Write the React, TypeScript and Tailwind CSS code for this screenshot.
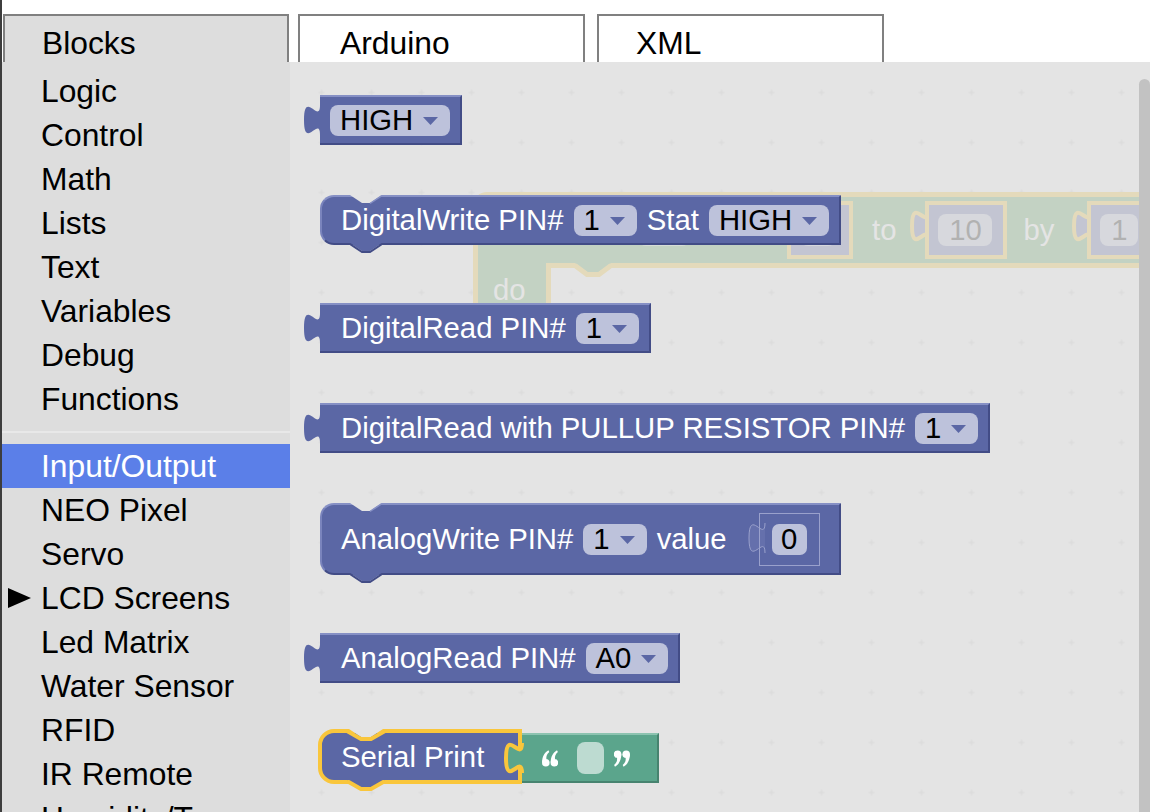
import React from "react";

const toolTop = ["Logic", "Control", "Math", "Lists", "Text", "Variables", "Debug", "Functions"];
const toolBottom = ["Input/Output", "NEO Pixel", "Servo", "LCD Screens", "Led Matrix", "Water Sensor", "RFID", "IR Remote", "Humidity/Temp"];

const PURPLE = "#5b67a5";
const PURPLE_DARK = "#424c86";
const GREEN = "#5ba58c";
const LOOP_GREEN = "#5ba55b";
const SELECT = "#f9c63c";
const FLYOUT = "#e4e4e4";

// blockly puzzle tab (output connector), knob spans x 4..20
function TabShape({ fill, stroke, strokeWidth = 0, className = "" }: { fill: string; stroke?: string; strokeWidth?: number; className?: string }) {
  return (
    <svg width="20" height="30" viewBox="0 0 20 30" overflow="visible" className={className}>
      <path d="M20 0 C20 20 4 -16 4 15 C4 46 20 10 20 30" fill={fill} stroke={stroke ?? "none"} strokeWidth={strokeWidth} />
    </svg>
  );
}

function Dropdown({ label }: { label: string }) {
  return (
    <div className="flex h-[31px] shrink-0 items-center rounded-[8px] bg-[#bdc2db] pl-[10px] pr-[12px] text-black">
      <span>{label}</span>
      <svg width="15" height="8" viewBox="0 0 15 8" className="ml-[10px] mt-[2px]">
        <path d="M0 0 H15 L7.5 8 Z" fill={PURPLE} />
      </svg>
    </div>
  );
}

function OutputBlock({ children, className = "" }: { children: React.ReactNode; className?: string }) {
  return (
    <div className={`relative flex h-[50px] shrink-0 items-center gap-[10px] border-y-2 border-r-2 border-t-[#8690c5] border-b-[#424c86] border-r-[#424c86] bg-[#5b67a5] pr-[10px] ${className}`}>
      <TabShape className="absolute left-[-20px] top-[8px]" fill={PURPLE} />
      {children}
    </div>
  );
}

function StatementBlock({ children, className = "" }: { children: React.ReactNode; className?: string }) {
  return (
    <div className={`relative flex shrink-0 items-center gap-[10px] rounded-l-[14px] border-2 border-t-[#8690c5] border-l-[#7a84bd] border-b-[#424c86] border-r-[#424c86] bg-[#5b67a5] pl-[19px] ${className}`}>
      <svg className="absolute left-[28px] top-[-2px]" width="32" height="10" viewBox="0 0 32 10">
        <path d="M0 0 L12 8 H20 L32 0 Z" fill={FLYOUT} />
        <path d="M20 8.5 L32 0.5" fill="none" stroke="#8690c5" strokeWidth="1.5" />
      </svg>
      <svg className="absolute bottom-[-10px] left-[28px]" width="32" height="10" viewBox="0 0 32 10">
        <path d="M0 0 L12 8 H20 L32 0 Z" fill={PURPLE} />
        <path d="M0 1 L12 9 H20 L32 1" fill="none" stroke={PURPLE_DARK} strokeWidth="2" />
      </svg>
      {children}
    </div>
  );
}

function QuoteMark({ x }: { x: number }) {
  return (
    <g transform={`translate(${x} 0)`}>
      <circle cx="3.8" cy="12.8" r="3.8" />
      <path d="M0.1 12.4 C0.1 6.6 2.6 2.6 6.4 0.3 L7.3 2 C5 3.9 4 6.3 4.4 9.2 Z" />
    </g>
  );
}

function Quote({ close = false, className = "" }: { close?: boolean; className?: string }) {
  return (
    <svg width="16" height="17" viewBox="0 0 16 17" fill="white" className={className}>
      <g transform={close ? "rotate(180 8 8.5)" : undefined}>
        <QuoteMark x={0} />
        <QuoteMark x={8.6} />
      </g>
    </svg>
  );
}

// value slot inside the (faded) loop block
function LoopSlot({ w, label, fieldW, className = "" }: { w: string; label?: string; fieldW: string; className?: string }) {
  return (
    <div className={`flex h-[58px] shrink-0 items-start ${className}`}>
      <TabShape className="mt-[10px] -mr-[3px]" fill={PURPLE} stroke="#ffcc33" strokeWidth={4} />
      <div className={`flex h-[58px] items-center border-4 border-[#ffcc33] bg-[#5b67a5] pl-[9px] ${w}`}>
        <div className={`flex h-[32px] items-center justify-center rounded-[8px] bg-[#bdc2db] text-black ${fieldW}`}>{label}</div>
      </div>
    </div>
  );
}

function LoopBlock() {
  return (
    <div className="absolute left-[183px] top-[130px] text-[29.3px] leading-none text-white">
      <div className="relative flex h-[76px] w-[730px] items-center rounded-tl-[14px] border-[5px] border-[#ffcc33] bg-[#5ba55b] pl-[15px]">
        {/* "count with i from" sits under the DigitalWrite block */}
        <div className="h-[20px] w-[131px] shrink-0" />
        <div className="ml-[14px] h-[32px] w-[52px] shrink-0 rounded-[8px] bg-[#bddbbd]" />
        <div className="ml-[15px] h-[20px] w-[58px] shrink-0" />
        <LoopSlot className="ml-[7px]" w="w-[66px]" fieldW="w-[36px]" />
        <span className="ml-[19px]">to</span>
        <LoopSlot className="ml-[12px]" w="w-[82px]" fieldW="w-[54px]" label="10" />
        <span className="ml-[16px]">by</span>
        <LoopSlot className="ml-[16px]" w="w-[100px]" fieldW="w-[38px]" label="1" />
      </div>
      <div className="relative -mt-[5px] h-[85px] w-[78px] border-x-[5px] border-b-[5px] border-[#ffcc33] bg-[#5ba55b] pl-[15px] pt-[12px]">do</div>
      <svg className="absolute left-[100px] top-[71px]" width="40" height="20" viewBox="0 0 40 20">
        <path d="M2 0 H38 L26 9 H14 Z" fill={LOOP_GREEN} />
        <path d="M2 2.5 L14 11.5 H26 L38 2.5" fill="none" stroke="#ffcc33" strokeWidth="5" />
      </svg>
    </div>
  );
}

function Flyout() {
  return (
    <div className="relative flex flex-col items-start pl-[30px] pt-[33px] text-[29.3px] leading-none text-white">
      {/* HIGH */}
      <OutputBlock className="pl-[10px]">
        <Dropdown label="HIGH" />
      </OutputBlock>

      {/* DigitalWrite */}
      <StatementBlock className="mt-[50px] h-[50px] pr-[10px]">
        <span className="whitespace-pre">DigitalWrite PIN#</span>
        <Dropdown label="1" />
        <span>Stat</span>
        <Dropdown label="HIGH" />
      </StatementBlock>

      {/* DigitalRead */}
      <OutputBlock className="mt-[58px] pl-[21px]">
        <span className="whitespace-pre">DigitalRead PIN#</span>
        <Dropdown label="1" />
      </OutputBlock>

      {/* DigitalRead pullup */}
      <OutputBlock className="mt-[50px] pl-[21px]">
        <span className="whitespace-pre">DigitalRead with PULLUP RESISTOR PIN#</span>
        <Dropdown label="1" />
      </OutputBlock>

      {/* AnalogWrite */}
      <StatementBlock className="mt-[50px] h-[72px] pr-[19px]">
        <span className="whitespace-pre">AnalogWrite PIN#</span>
        <Dropdown label="1" />
        <span>value</span>
        <div className="ml-[8px] flex h-[53px] items-start">
          <TabShape className="mt-[10px] -mr-[6px]" fill="#6570ac" stroke="#9aa1cc" strokeWidth={1} />
          <div className="flex h-[53px] w-[61px] items-center justify-center border border-[#9aa1cc]">
            <div className="flex h-[31px] w-[35px] items-center justify-center rounded-[7px] bg-[#bdc2db] text-black">0</div>
          </div>
        </div>
      </StatementBlock>

      {/* AnalogRead */}
      <OutputBlock className="mt-[58px] pl-[21px]">
        <span className="whitespace-pre">AnalogRead PIN#</span>
        <Dropdown label="A0" />
      </OutputBlock>

      {/* Serial Print + text */}
      <div className="-ml-[2px] mt-[46px] flex items-start">
        <div className="relative flex h-[55px] w-[204px] shrink-0 items-center rounded-l-[16px] border-4 border-[#f9c63c] bg-[#5b67a5] pl-[19px]">
          <svg className="absolute left-[24px] top-[-4px]" width="40" height="16" viewBox="0 0 40 16">
            <path d="M3 0 L15 8 H25 L37 0 Z" fill={FLYOUT} />
            <path d="M1 2 L15 10 H25 L39 2" fill="none" stroke={SELECT} strokeWidth="4" />
          </svg>
          <svg className="absolute bottom-[-14px] left-[24px]" width="40" height="14" viewBox="0 0 40 14">
            <path d="M1 0 L15 8 H25 L39 0 Z" fill={PURPLE} />
            <path d="M1 1 L15 9 H25 L39 1" fill="none" stroke={SELECT} strokeWidth="4" />
          </svg>
          <span className="whitespace-pre">Serial Print</span>
        </div>
        <div className="relative mt-[4px] flex h-[50px] w-[137px] shrink-0 items-center border-y-2 border-r-2 border-t-[#8cc3b0] border-b-[#47836f] border-r-[#47836f] bg-[#5ba58c] pl-[20px]">
          <TabShape className="absolute left-[-20px] top-[8px]" fill={GREEN} stroke={SELECT} strokeWidth={4} />
          <Quote />
          <div className="ml-[19px] h-[32px] w-[27px] rounded-[8px] bg-[#bddbd1]" />
          <Quote close className="ml-[10px]" />
        </div>
      </div>
    </div>
  );
}

export default function App() {
  return (
    <div className="flex h-[812px] w-[1150px] overflow-hidden bg-white font-['Liberation_Sans',Arial,sans-serif] text-black">
      <div className="w-[2px] shrink-0 bg-[#3d3d3d]" />
      <div className="flex min-w-0 flex-1 flex-col">
        {/* tabs */}
        <div className="flex h-[62px] shrink-0 items-end text-[31.8px] leading-[44px]">
          <div className="ml-[1px] h-[48px] w-[286px] overflow-hidden border-2 border-b-0 border-[#808080] bg-[#dddddd] pl-[37px] pt-[5px]">Blocks</div>
          <div className="ml-[9px] h-[48px] w-[287px] overflow-hidden border-2 border-b-0 border-[#808080] bg-white pl-[40px] pt-[5px]">Arduino</div>
          <div className="ml-[12px] h-[48px] w-[287px] overflow-hidden border-2 border-b-0 border-[#808080] bg-white pl-[37px] pt-[5px]">XML</div>
        </div>

        <div className="flex min-h-0 flex-1">
          {/* toolbox */}
          <div className="w-[288px] shrink-0 overflow-hidden bg-[#dddddd] pt-[7px] text-[31.8px] leading-[44px]">
            {toolTop.map((t) => (
              <div key={t} className="h-[44px] pl-[39px]">{t}</div>
            ))}
            <div className="mb-[11px] mt-[10px] h-[2px] bg-[#e8e8e8]" />
            {toolBottom.map((t) =>
              t === "LCD Screens" ? (
                <div key={t} className="flex h-[44px] items-center pl-[6px]">
                  <svg width="23" height="20" viewBox="0 0 23 20" className="mr-[10px]">
                    <path d="M0 0 L23 10 L0 20 Z" fill="black" />
                  </svg>
                  <span>{t}</span>
                </div>
              ) : (
                <div key={t} className={t === "Input/Output" ? "h-[44px] bg-[#5b7fe8] pl-[39px] text-white" : "h-[44px] pl-[39px]"}>{t}</div>
              )
            )}
          </div>

          {/* workspace */}
          <div className="relative flex-1 overflow-hidden bg-white">
            <svg className="absolute inset-0 h-full w-full">
              <defs>
                <pattern id="grid" width="50" height="50" patternUnits="userSpaceOnUse" x="6.5" y="5.5">
                  <path d="M22 25 H28 M25 22 V28" stroke="#c8c8c8" strokeWidth="1" />
                </pattern>
              </defs>
              <rect width="100%" height="100%" fill="url(#grid)" />
            </svg>
            <LoopBlock />
            <div className="absolute inset-0 bg-[#dddddd]/80" />
            <Flyout />
            <div className="absolute bottom-0 right-0 top-[17px] w-[11px] rounded-t-[6px] bg-[#c2c2c2]" />
          </div>
        </div>
      </div>
    </div>
  );
}
